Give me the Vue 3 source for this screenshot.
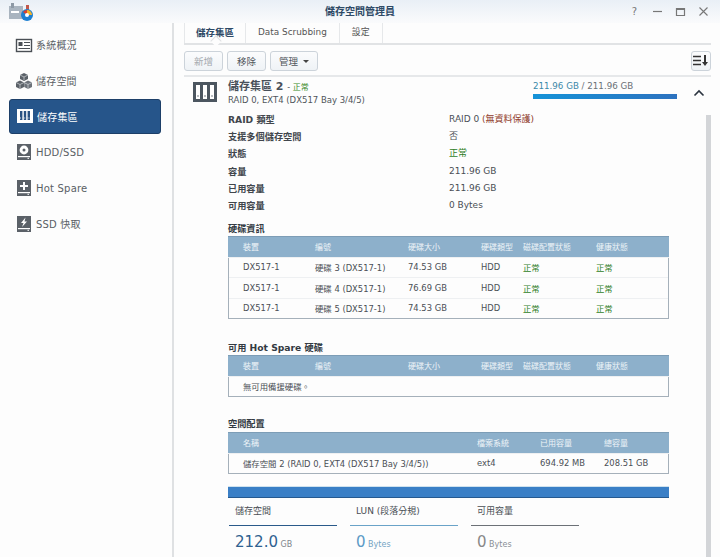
<template>
  <div class="window">
    <header class="titlebar">
      <svg class="app-logo" width="26" height="20" viewBox="0 0 26 20">
        <rect x="1" y="4" width="14" height="13" fill="#a9b4bf"/>
        <rect x="3" y="1" width="3" height="5" fill="#8d99a5"/>
        <rect x="18" y="3" width="3" height="5" fill="#c0574a"/>
        <rect x="3" y="9" width="8" height="2" fill="#fff"/>
        <circle cx="19" cy="13" r="6" fill="#1d7fd1"/>
        <path d="M19 13V8a5 5 0 0 1 5 5z" fill="#f4b22a"/>
        <path d="M19 13l-4-3a5 5 0 0 1 4-2z" fill="#d9412f"/>
        <circle cx="19" cy="13" r="2" fill="#fff"/>
      </svg>
      <div class="win-title">儲存空間管理員</div>
      <div class="win-btns">
        <span class="help">?</span>
        <svg width="11" height="11" viewBox="0 0 11 11"><path d="M1 5.5H10" stroke="#777" stroke-width="1.2"/></svg>
        <svg width="11" height="11" viewBox="0 0 11 11"><path d="M1.5 2.5H9.5V9.5H1.5ZM1.5 3.5H9.5" fill="none" stroke="#777" stroke-width="1.2"/></svg>
        <svg width="11" height="11" viewBox="0 0 11 11"><path d="M1.5 1.5L9.5 9.5M9.5 1.5L1.5 9.5" stroke="#777" stroke-width="1.1"/></svg>
      </div>
    </header>

    <div class="body">
      <nav class="sidebar">
        <div v-for="item in navItems" :key="item.label" class="nav-item" :class="{ active: item.active }">
          <svg class="nav-icon" width="18" height="18" viewBox="0 0 18 18">
            <template v-if="item.icon === 'overview'">
              <rect x="1.5" y="3.5" width="15" height="12" fill="#fff" stroke="#4a4f55" stroke-width="1.4"/>
              <rect x="3.5" y="6" width="4" height="4" fill="#4a4f55"/>
              <path d="M9 6.5H15M9 9.5H15M3.5 12.5H15" stroke="#4a4f55" stroke-width="1.2"/>
            </template>
            <template v-else-if="item.icon === 'volume'">
              <path d="M9 1L13 3V7L9 9L5 7V3Z" fill="#5b6168"/>
              <path d="M5 8.5L9 10.5V15L5 17L1 15V10.5Z" fill="#5b6168"/>
              <path d="M13 8.5L17 10.5V15L13 17L9.2 15V10.5Z" fill="#6c727a"/>
              <path d="M5 3L9 5L13 3M1 10.5L5 12.5L9 10.5L13 12.5L17 10.5M9 5V8M5 12.5V17M13 12.5V17" fill="none" stroke="#d6d9dc" stroke-width=".7"/>
            </template>
            <template v-else-if="item.icon === 'pool'">
              <rect x="1" y="2" width="16" height="14" fill="#fff"/>
              <path d="M4 4H6.4V13H4ZM7.8 4H10.2V13H7.8ZM11.6 4H14V13H11.6Z" fill="#2a5282"/>
              <path d="M4 11H6.4M7.8 11H10.2M11.6 11H14" stroke="#fff" stroke-width=".8" stroke-dasharray="1 1"/>
            </template>
            <template v-else>
              <rect x="2" y="1" width="14" height="16" fill="#5b6168"/>
              <rect x="3" y="13" width="12" height="1.2" fill="#fff"/>
              <rect x="12.5" y="14.8" width="1.5" height="1" fill="#fff"/>
              <g v-if="item.icon === 'hdd'">
                <circle cx="9" cy="7" r="4.4" fill="#fff"/>
                <circle cx="9" cy="7" r="1.5" fill="#5b6168"/>
              </g>
              <path v-else-if="item.icon === 'spare'" d="M8 3H10V6H13V8H10V11H8V8H5V6H8Z" fill="#fff"/>
              <path v-else d="M10.5 2.5L6 8H8.5L7 12L12 6.5H9.5Z" fill="#fff"/>
            </template>
          </svg>
          <span>{{ item.label }}</span>
        </div>
      </nav>

      <main class="main">
        <div class="tabs">
          <div class="tab selected">儲存集區</div>
          <div class="tab">Data Scrubbing</div>
          <div class="tab">設定</div>
        </div>

        <div class="toolbar">
          <button class="btn disabled">新增</button>
          <button class="btn">移除</button>
          <button class="btn manage">管理<i class="caret"></i></button>
          <button class="btn sort">
            <svg width="16" height="12" viewBox="0 0 16 12">
              <path d="M0 1.5H8M0 5.5H8M0 9.5H8" stroke="#333" stroke-width="1.6"/>
              <path d="M12 0V8" stroke="#333" stroke-width="2"/>
              <path d="M9 7H15L12 11Z" fill="#333"/>
            </svg>
          </button>
        </div>

        <div class="pool-head">
          <svg class="pool-icon" width="24" height="20" viewBox="0 0 24 20">
            <rect width="24" height="20" fill="#4c5660"/>
            <path d="M3 3H7V17H3ZM10 3H14V17H10ZM17 3H21V17H17Z" fill="#fff"/>
            <path d="M4.5 14H5.5M11.5 14H12.5M18.5 14H19.5" stroke="#4c5660" stroke-width="1.4"/>
          </svg>
          <div class="pool-name">
            <div class="pool-title">儲存集區 2 <small>- <b>正常</b></small></div>
            <div class="pool-sub">RAID 0, EXT4 (DX517 Bay 3/4/5)</div>
          </div>
          <div class="usage">
            <div class="usage-text"><span>211.96 GB</span> / 211.96 GB</div>
            <div class="usage-bar"></div>
          </div>
          <svg class="chevron" width="12" height="8" viewBox="0 0 12 8"><path d="M1.5 6.5L6 2L10.5 6.5" fill="none" stroke="#2b3440" stroke-width="1.6"/></svg>
        </div>

        <div class="content">
          <div class="scroller"></div>

          <dl class="info">
            <template v-for="row in infoRows" :key="row.label">
              <dt>{{ row.label }}</dt>
              <dd :class="row.cls">{{ row.value }}{{ row.note ? ' ' : '' }}<em v-if="row.note">{{ row.note }}</em></dd>
            </template>
          </dl>

          <h4 class="sec first">硬碟資訊</h4>
          <div class="tbl disks">
            <div class="tr th"><span v-for="c in diskCols" :key="c">{{ c }}</span></div>
            <div v-for="d in disks" :key="d.name" class="tr">
              <span>DX517-1</span><span>{{ d.name }}</span><span>{{ d.size }}</span><span>HDD</span>
              <span class="ok">正常</span><span class="ok">正常</span>
            </div>
          </div>

          <h4 class="sec second">可用 Hot Spare 硬碟</h4>
          <div class="tbl disks">
            <div class="tr th"><span v-for="c in diskCols" :key="c">{{ c }}</span></div>
            <div class="tr"><span class="wide">無可用備援硬碟。</span></div>
          </div>

          <h4 class="sec third">空間配置</h4>
          <div class="tbl alloc">
            <div class="tr th"><span>名稱</span><span>檔案系統</span><span>已用容量</span><span>總容量</span></div>
            <div class="tr"><span>儲存空間 2 (RAID 0, EXT4 (DX517 Bay 3/4/5))</span><span>ext4</span><span>694.92 MB</span><span>208.51 GB</span></div>
          </div>

          <div class="alloc-bar"></div>

          <div class="stats">
            <div v-for="s in stats" :key="s.label" class="stat" :class="s.cls">
              <div class="stat-label">{{ s.label }}</div>
              <div class="stat-value"><strong>{{ s.value }}</strong> <span>{{ s.unit }}</span></div>
            </div>
          </div>
        </div>
      </main>
    </div>
  </div>
</template>

<script setup>
const navItems = [
  { label: '系統概況', icon: 'overview' },
  { label: '儲存空間', icon: 'volume' },
  { label: '儲存集區', icon: 'pool', active: true },
  { label: 'HDD/SSD', icon: 'hdd' },
  { label: 'Hot Spare', icon: 'spare' },
  { label: 'SSD 快取', icon: 'cache' }
]

const infoRows = [
  { label: 'RAID 類型', value: 'RAID 0', note: '(無資料保護)' },
  { label: '支援多個儲存空間', value: '否' },
  { label: '狀態', value: '正常', cls: 'ok' },
  { label: '容量', value: '211.96 GB' },
  { label: '已用容量', value: '211.96 GB' },
  { label: '可用容量', value: '0 Bytes' }
]

const diskCols = ['裝置', '編號', '硬碟大小', '硬碟類型', '磁碟配置狀態', '健康狀態']

const disks = [
  { name: '硬碟 3 (DX517-1)', size: '74.53 GB' },
  { name: '硬碟 4 (DX517-1)', size: '76.69 GB' },
  { name: '硬碟 5 (DX517-1)', size: '74.53 GB' }
]

const stats = [
  { label: '儲存空間', value: '212.0', unit: 'GB', cls: 'used' },
  { label: 'LUN (段落分規)', value: '0', unit: 'Bytes', cls: 'lun' },
  { label: '可用容量', value: '0', unit: 'Bytes', cls: 'free' }
]
</script>

<style>
html, body { margin: 0; overflow: hidden; }
</style>

<style scoped>
.window {
  width: 720px;
  height: 557px;
  overflow: hidden;
  background: #fdfdfd;
  color: #4a4f55;
  font-family: "DejaVu Sans", "Noto Sans CJK TC", sans-serif;
  font-size: 9.5px;
  display: flex;
  flex-direction: column;
}

/* title bar */
.titlebar {
  height: 23px;
  flex-shrink: 0;
  display: flex;
  align-items: center;
  position: relative;
  background: linear-gradient(#e9eff6, #fafbfc);
}
.app-logo { margin-left: 8px; }
.win-title {
  position: absolute;
  left: 0;
  right: 0;
  top: 3px;
  text-align: center;
  font-size: 10px;
  font-weight: 700;
  color: #2f4a66;
}
.win-btns {
  margin-left: auto;
  margin-right: 11px;
  display: flex;
  align-items: center;
  gap: 12px;
  position: relative;
}
.help { width: 11px; text-align: center; font-size: 10px; color: #777; }

.body { flex: 1; display: flex; min-height: 0; }

/* sidebar */
.sidebar {
  width: 174px;
  flex-shrink: 0;
  box-sizing: border-box;
  padding: 4px 11px 0 9px;
  border-right: 2px solid #dfe1e3;
}
.nav-item {
  height: 35.8px;
  display: flex;
  align-items: center;
  gap: 3px;
  padding-left: 6px;
  font-size: 10px;
  color: #5a5f65;
  letter-spacing: .2px;
}
.nav-item.active {
  background: #26558a;
  border: 1px solid #1d3f68;
  border-radius: 3px;
  box-sizing: border-box;
  color: #fff;
}

/* tabs and toolbar */
.main { flex: 1; min-width: 0; display: flex; flex-direction: column; }
.tabs {
  height: 20px;
  flex-shrink: 0;
  margin-left: 10px;
  margin-right: 9px;
  display: flex;
  border-bottom: 2px solid #e1e3e5;
}
.tab {
  padding: 0 12px;
  height: 20px;
  line-height: 19px;
  border-right: 1px solid #e6e8ea;
  color: #555;
  font-size: 8.9px;
}
.tab:first-child { border-left: 1px solid #e6e8ea; padding: 0 11px; }
.tab.selected { font-weight: 700; font-size: 9.5px; color: #2f4a66; position: relative; }
.tab.selected::after {
  content: "";
  position: absolute;
  left: 27px;
  bottom: -2px;
  width: 7px;
  height: 7px;
  background: #fdfdfd;
  border-left: 1px solid #dfe1e3;
  border-top: 1px solid #dfe1e3;
  transform: rotate(45deg);
}
.toolbar {
  height: 32px;
  flex-shrink: 0;
  box-sizing: border-box;
  margin-left: 10px;
  margin-right: 9px;
  padding-top: 6px;
  display: flex;
  gap: 4px;
  border-bottom: 2px solid #e6e8ea;
}
.btn {
  height: 20px;
  padding: 0;
  width: 39px;
  border: 1px solid #ccd3da;
  border-radius: 3px;
  background: linear-gradient(#fbfcfd, #eff3f6);
  color: #50565c;
  font: inherit;
  display: flex;
  align-items: center;
  justify-content: center;
}
.btn.disabled { color: #a4a9ae; }
.btn.manage { width: 48px; gap: 5px; }
.caret {
  border-left: 3px solid transparent;
  border-right: 3px solid transparent;
  border-top: 3px solid #444;
}
.btn.sort { margin-left: auto; width: 20px; }

/* pool header */
.pool-head {
  height: 33px;
  flex-shrink: 0;
  display: flex;
  position: relative;
  padding-left: 19px;
}
.pool-icon { margin-top: 5px; flex-shrink: 0; }
.pool-name { margin-left: 11px; padding-top: 4px; }
.pool-title { font-size: 11px; font-weight: 700; color: #48505a; line-height: 12px; }
.pool-title small { font-size: 8px; font-weight: 400; }
.pool-title b { color: #3a8a2a; font-weight: 400; }
.pool-sub { font-size: 8.5px; line-height: 12px; color: #4f555b; }
.usage { position: absolute; left: 359px; top: 3px; width: 144px; }
.usage-text { font-size: 8.7px; line-height: 12px; color: #6a7076; }
.usage-text span { color: #3b88a8; }
.usage-bar {
  height: 5px;
  margin-top: 2px;
  background: linear-gradient(90deg, #1593d8, #2d72bf);
}
.chevron { position: absolute; left: 519px; top: 12px; }

/* scrolling content */
.content {
  flex: 1;
  min-height: 0;
  position: relative;
  padding-left: 54px;
  padding-right: 51px;
  overflow: hidden;
}
.scroller { position: absolute; right: 9px; top: 5px; bottom: 0; width: 5px; background: #d3d5d8; }

.info {
  margin: 0;
  padding-top: 0.5px;
  display: grid;
  grid-template-columns: 221px 1fr;
  grid-auto-rows: 17.35px;
  line-height: 17.35px;
  font-size: 9.2px;
}
.info dt { font-weight: 700; color: #41464c; }
.info dd { margin: 0; font-size: 9px; }
.info em { font-style: normal; color: #8f3a2a; }
.ok { color: #2f7d1f; }

.sec {
  margin: 0;
  font-size: 9.2px;
  font-weight: 700;
  line-height: 12px;
  color: #333a42;
}
.sec.first { margin-top: 8.5px; margin-bottom: 0.5px; }
.sec.second { margin-top: 23px; margin-bottom: 0.5px; }
.sec.third { margin-top: 21px; margin-bottom: 1.5px; }

.tbl {
  border: 1px solid #a5b0ba;
  border-top: none;
  font-size: 8.4px;
}
.tr {
  height: 19.5px;
  display: grid;
  align-items: center;
  padding-left: 14px;
  border-bottom: 1px solid #eef0f2;
}
.tr:last-child { border-bottom: none; }
.disks .tr { grid-template-columns: 72px 93px 73px 42px 73px 1fr; }
.alloc .tr { grid-template-columns: 234px 63px 64px 1fr; }
.tr.th {
  height: 20px;
  margin: 0 -1px;
  background: #8db0cb;
  border-top: 1px solid #7d9db6;
  color: #eef4f8;
  padding-left: 15px;
  font-size: 8px;
}
.wide { grid-column: 1 / -1; }

.alloc-bar {
  height: 10px;
  margin-top: 12px;
  background: #3a7fc6;
  border-bottom: 1px solid #25598f;
  border-top: 1px solid #cfe2ee;
}

.stats { display: flex; gap: 13px; margin-top: 6px; padding-left: 1px; }
.stat { width: 108px; }
.stat-label {
  height: 21px;
  padding-left: 6px;
  line-height: 15px;
  font-size: 9px;
  border-bottom: 1px solid #555;
}
.stat.used .stat-label { border-bottom-color: #2a5a8a; }
.stat.lun .stat-label { border-bottom-color: #6aa3c8; }
.stat.free .stat-label { border-bottom-color: #6c7177; }
.stat-value { padding-left: 6px; padding-top: 7px; font-size: 8px; color: #8a9096; white-space: nowrap; }
.stat-value strong { font-size: 15px; font-weight: 400; color: #888; }
.stat.used strong { color: #2f6190; }
.stat.lun strong { color: #5b9ac6; }
.stat.used span { color: #7d858c; }
.stat.lun span { color: #74a4c4; }
</style>
